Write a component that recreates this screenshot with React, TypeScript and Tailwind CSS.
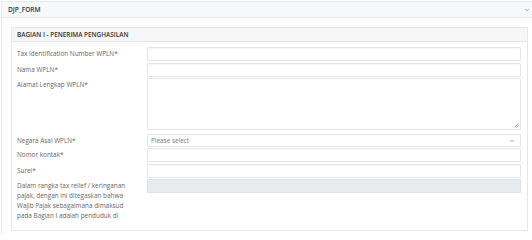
import { ChevronDown } from "lucide-react";

const label = "text-[#666] text-[6.4px] leading-[10px] pt-[2px] w-[130px] shrink-0";
const field =
  "flex-1 h-[14px] border border-[#e4e6e8] rounded-[1px] bg-white shadow-[inset_0_1px_1px_rgba(0,0,0,0.03)]";

export default function App() {
  return (
    <div className="w-[532px] h-[234px] overflow-hidden bg-white font-['Open_Sans',sans-serif]">
      <div className="mt-px ml-px border-l border-t border-[#e8e9ea] h-[233px]">
        <div className="h-[16px] bg-[#f7f8f9] border-b border-[#e8e9ea] flex items-center justify-between pl-[6px] pr-[2px]">
          <span className="text-[6.6px] font-semibold text-[#333]">DJP_FORM</span>
          <ChevronDown className="w-[6px] h-[6px] text-[#777]" strokeWidth={3} />
        </div>

        <div className="pt-[9px] pl-[9px] pr-[4px]">
          <div className="border border-[#e6e7e8] w-[517px]">
            <div className="h-[14px] bg-[#f5f6f7] border-b border-[#e6e7e8] flex items-center pl-[5px]">
              <span className="text-[6.4px] font-semibold text-[#333]">
                BAGIAN I - PENERIMA PENGHASILAN
              </span>
            </div>

            <div className="pt-[5px] pl-[5px] pr-[6px] pb-[9px] flex flex-col">
              <div className="flex mb-[2px]">
                <div className={label}>Tax Identification Number WPLN*</div>
                <div className={field} />
              </div>
              <div className="flex mb-px">
                <div className={label}>Nama WPLN*</div>
                <div className={field} />
              </div>
              <div className="flex mb-[4px]">
                <div className={label}>Alamat Lengkap WPLN*</div>
                <div className="flex-1 h-[52px] border border-[#e4e6e8] rounded-[1px] bg-white relative">
                  <svg
                    className="absolute right-px bottom-px w-[5px] h-[5px]"
                    viewBox="0 0 5 5"
                  >
                    <path d="M4.5 0.5 L0.5 4.5 M4.5 2.5 L2.5 4.5" stroke="#888" strokeWidth="0.8" />
                  </svg>
                </div>
              </div>
              <div className="flex mb-px">
                <div className={label}>Negara Asal WPLN*</div>
                <div className="flex-1 h-[13px] border border-[#e4e6e8] rounded-[1px] bg-white flex items-center justify-between pl-[3px] pr-[5px]">
                  <span className="text-[6.4px] text-[#777]">Please select</span>
                  <ChevronDown className="w-[6px] h-[6px] text-[#888]" strokeWidth={3} />
                </div>
              </div>
              <div className="flex mb-[2px]">
                <div className={label}>Nomor kontak*</div>
                <div className={field} />
              </div>
              <div className="flex mb-px">
                <div className={label}>Surel*</div>
                <div className={field} />
              </div>
              <div className="flex">
                <div className={label}>
                  Dalam rangka tax relief / keringanan
                  <br />
                  pajak, dengan ini ditegaskan bahwa
                  <br />
                  Wajib Pajak sebagaimana dimaksud
                  <br />
                  pada Bagian I adalah penduduk di
                </div>
                <div className="flex-1 h-[14px] border border-[#dfe2e5] rounded-[1px] bg-[#e9ecef]" />
              </div>
            </div>
          </div>
        </div>
      </div>
    </div>
  );
}
